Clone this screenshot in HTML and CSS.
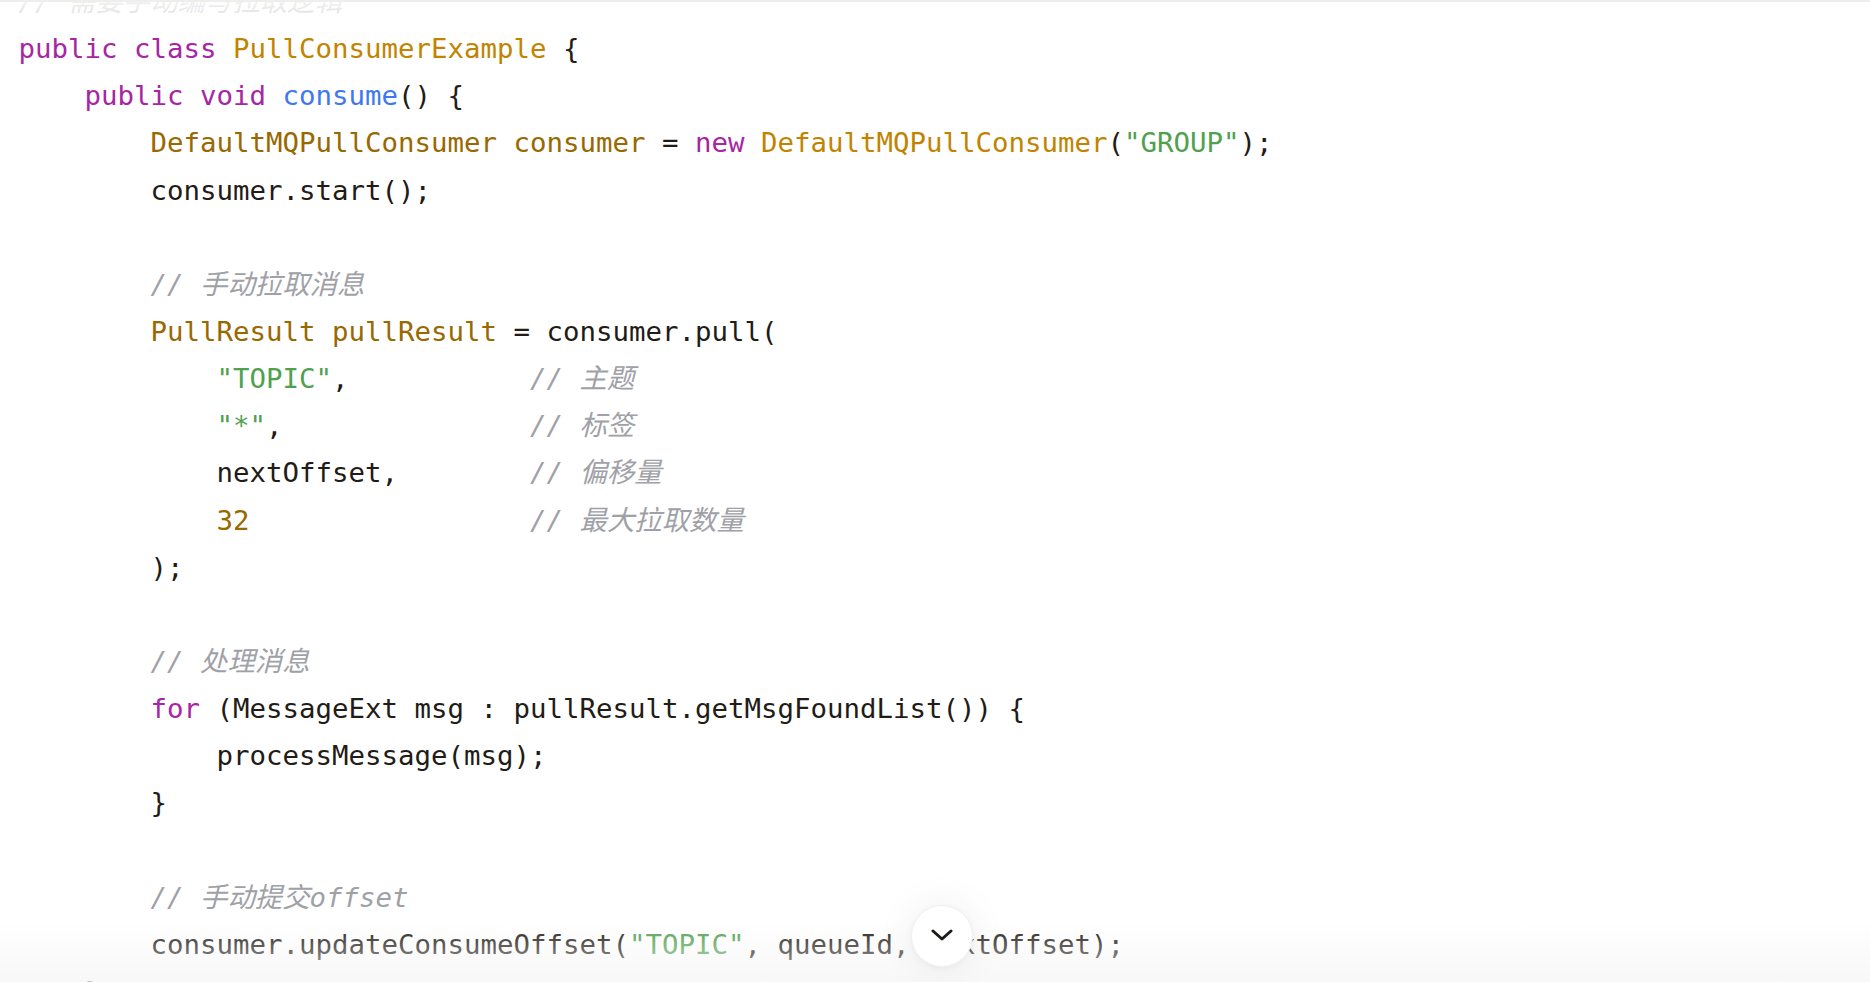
FILE: index.html
```html
<!DOCTYPE html>
<html lang="zh">
<head>
<meta charset="utf-8">
<title>PullConsumerExample</title>
<link rel="stylesheet" href="styles.css">
</head>
<body>
<div class="top-rule"></div>
<main class="viewer">
<pre class="code"><span class="c">// 需要手动编写拉取逻辑</span>
<span class="k">public</span> <span class="k">class</span> <span class="t">PullConsumerExample</span> {
    <span class="k">public</span> <span class="k">void</span> <span class="f">consume</span>() {
        <span class="v">DefaultMQPullConsumer</span> <span class="v">consumer</span> = <span class="k">new</span> <span class="t">DefaultMQPullConsumer</span>(<span class="s">"GROUP"</span>);
        consumer.start();

        <span class="c">// 手动拉取消息</span>
        <span class="v">PullResult</span> <span class="v">pullResult</span> = consumer.pull(
            <span class="s">"TOPIC"</span>,           <span class="c">// 主题</span>
            <span class="s">"*"</span>,               <span class="c">// 标签</span>
            nextOffset,        <span class="c">// 偏移量</span>
            <span class="v">32</span>                 <span class="c">// 最大拉取数量</span>
        );

        <span class="c">// 处理消息</span>
        <span class="k">for</span> (MessageExt msg : pullResult.getMsgFoundList()) {
            processMessage(msg);
        }

        <span class="c">// 手动提交offset</span>
        consumer.updateConsumeOffset(<span class="s">"TOPIC"</span>, queueId, nextOffset);
    }
}</pre>
<div class="fade-top"></div>
<div class="fade-bottom"></div>
<button class="scroll-down" aria-label="滚动到底部">
<svg width="22" height="12" viewBox="0 0 22 12" fill="none"><path d="M2 2 L11 10 L20 2" stroke="#1d1a17" stroke-width="3" stroke-linecap="round" stroke-linejoin="round"/></svg>
</button>
</main>
</body>
</html>
```

FILE: styles.css
```css
html, body {
  margin: 0;
  padding: 0;
  background: #ffffff;
  height: 100%;
  overflow: hidden;
}

.top-rule {
  height: 2px;
  background: #eeeeea;
}

.viewer {
  position: relative;
  height: 980px;
  overflow: hidden;
}

.code {
  margin: -24px 0 0 0;
  padding: 0 0 0 18.5px;
  font-family: "DejaVu Sans Mono", "Noto Sans CJK SC", monospace;
  font-size: 27.42px;
  line-height: 47.14px;
  color: #221b16;
  white-space: pre;
}

.k { color: #a626a4; }
.t { color: #c18401; }
.v { color: #986801; }
.f { color: #4078f2; }
.s { color: #50a14f; }
.c { color: #a0a1a7; font-style: italic; }

.fade-top {
  position: absolute;
  left: 0;
  right: 0;
  top: 0;
  height: 22px;
  background: linear-gradient(to bottom, rgba(255,255,255,0.85), rgba(255,255,255,0.6));
}

.fade-bottom {
  position: absolute;
  left: 0;
  right: 0;
  bottom: 0;
  height: 60px;
  background: linear-gradient(to bottom, rgba(245,245,245,0), rgba(245,245,245,0.75));
}

.scroll-down {
  position: absolute;
  left: 911px;
  top: 903px;
  width: 62px;
  height: 62px;
  border-radius: 50%;
  border: 1px solid #f0f0f0;
  background: #ffffff;
  box-shadow: 0 0 40px rgba(0,0,0,0.07), 0 2px 6px rgba(0,0,0,0.04);
  display: flex;
  align-items: center;
  justify-content: center;
  padding: 0 0 2px 0;
}
```
